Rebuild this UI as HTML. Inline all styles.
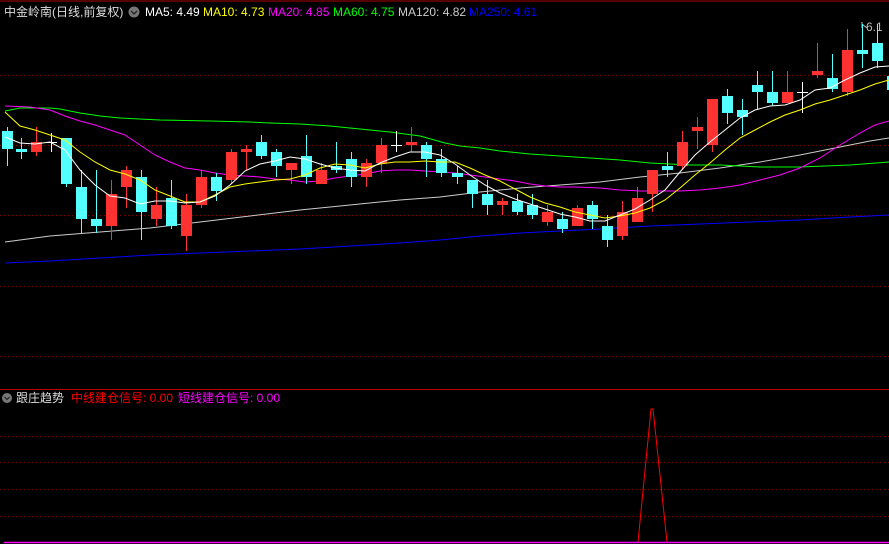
<!DOCTYPE html>
<html><head><meta charset="utf-8"><style>
html,body{margin:0;padding:0;background:#000;width:889px;height:544px;overflow:hidden}
svg{display:block}
text{font-family:"Liberation Sans","Noto Sans CJK SC",sans-serif;font-size:12px}
</style></head><body>
<svg width="889" height="544" viewBox="0 0 889 544" xmlns="http://www.w3.org/2000/svg">
<rect width="889" height="544" fill="#000"/>
<line x1="0" y1="1" x2="889" y2="1" stroke="#a00" stroke-width="1"/>
<g stroke="#800" stroke-dasharray="1,3" stroke-width="1">
<line x1="0" y1="75.5" x2="889" y2="75.5"/>
<line x1="0" y1="145.5" x2="889" y2="145.5"/>
<line x1="0" y1="215.5" x2="889" y2="215.5"/>
<line x1="0" y1="286.5" x2="889" y2="286.5"/>
<line x1="0" y1="356.5" x2="889" y2="356.5"/>
<line x1="0" y1="436.5" x2="889" y2="436.5"/>
<line x1="0" y1="462.5" x2="889" y2="462.5"/>
<line x1="0" y1="489.5" x2="889" y2="489.5"/>
<line x1="0" y1="516.5" x2="889" y2="516.5"/>
</g>
<line x1="0" y1="389.5" x2="889" y2="389.5" stroke="#b00" stroke-width="1"/>

<text x="4" y="16" fill="#ddd">中金岭南(日线,前复权)</text>
<circle cx="134" cy="12" r="5.5" fill="#777"/><path d="M131 11l3 3 3-3" stroke="#222" fill="none" stroke-width="1.3"/>
<text x="145" y="16" fill="#fff">MA5: 4.49</text>
<text x="203" y="16" fill="#ff0">MA10: 4.73</text>
<text x="268" y="16" fill="#f0f">MA20: 4.85</text>
<text x="333" y="16" fill="#0f0">MA60: 4.75</text>
<text x="398" y="16" fill="#ccc">MA120: 4.82</text>
<text x="469" y="16" fill="#00f">MA250: 4.61</text>
<text x="866" y="31" fill="#bbb">6.1</text>
<path d="M862 22l0 6M862 24l5 4" stroke="#bbb" fill="none"/>

<g fill="none" stroke-width="1">
<polyline stroke="#00f" points="5,263 50,261 100,258 150,255 200,253 250,251 300,249 350,246 400,243 440,240 480,236 520,233 560,231 600,229 650,226 700,224 750,222 800,220 850,217 889,215"/>
<polyline stroke="#ccc" points="5,242 50,236 100,232 150,228 200,222 250,216 300,210 350,205 400,200 440,197 480,192 520,188 560,185 600,182 640,177 680,173 720,168 760,162 800,155 840,147 870,141 889,138"/>
<polyline stroke="#0f0" points="5,111 20,108 50,108 60,109 80,113 100,116 120,118 160,120 210,121 250,122 270,123 300,124 330,126 360,129 390,132 420,136 445,143 460,146 480,148 500,151 530,154 560,156 590,158 620,160 650,163 690,165 720,165 760,167 800,167 850,165 889,162"/>
<polyline stroke="#f0f" points="5,106 30,107 50,110 65,116 80,121 95,125 110,130 125,135 140,145 155,155 170,162 185,168 200,170 215,173 230,175 245,176 260,177 275,179 290,180 305,182 320,181 335,178 350,176 365,174 380,171 395,170 410,170 425,171 440,172 455,173 470,175 485,177 500,179 515,181 530,184 545,186 560,187 575,187 600,188 620,190 640,191 660,191 680,191 700,190 720,188 740,185 760,180 780,175 800,168 820,158 840,145 860,133 875,125 889,121"/>
</g>

<g fill="#54ffff" stroke="#54ffff">
<line x1="7.5" y1="127" x2="7.5" y2="166"/><rect x="2" y="131" width="11" height="18" stroke="none"/>
<line x1="21.5" y1="138" x2="21.5" y2="159"/><rect x="16" y="149" width="11" height="3" stroke="none"/>
<line x1="66.5" y1="138" x2="66.5" y2="187"/><rect x="61" y="138" width="11" height="46" stroke="none"/>
<line x1="81.5" y1="170" x2="81.5" y2="233"/><rect x="76" y="187" width="11" height="32" stroke="none"/>
<line x1="96.5" y1="170" x2="96.5" y2="233"/><rect x="91" y="219" width="11" height="7" stroke="none"/>
<line x1="141.5" y1="170" x2="141.5" y2="240"/><rect x="136" y="177" width="11" height="35" stroke="none"/>
<line x1="171.5" y1="180" x2="171.5" y2="229"/><rect x="166" y="198" width="11" height="28" stroke="none"/>
<line x1="216.5" y1="173" x2="216.5" y2="201"/><rect x="211" y="177" width="11" height="14" stroke="none"/>
<line x1="261.5" y1="135" x2="261.5" y2="159"/><rect x="256" y="142" width="11" height="14" stroke="none"/>
<line x1="276.5" y1="149" x2="276.5" y2="177"/><rect x="271" y="152" width="11" height="14" stroke="none"/>
<line x1="306.5" y1="135" x2="306.5" y2="184"/><rect x="301" y="156" width="11" height="21" stroke="none"/>
<line x1="336.5" y1="142" x2="336.5" y2="173"/><rect x="331" y="166" width="11" height="4" stroke="none"/>
<line x1="351.5" y1="152" x2="351.5" y2="187"/><rect x="346" y="159" width="11" height="18" stroke="none"/>
<line x1="426.5" y1="142" x2="426.5" y2="177"/><rect x="421" y="145" width="11" height="14" stroke="none"/>
<line x1="441.5" y1="149" x2="441.5" y2="177"/><rect x="436" y="159" width="11" height="14" stroke="none"/>
<line x1="457.5" y1="166" x2="457.5" y2="184"/><rect x="452" y="173" width="11" height="4" stroke="none"/>
<line x1="472.5" y1="180" x2="472.5" y2="208"/><rect x="467" y="180" width="11" height="14" stroke="none"/>
<line x1="487.5" y1="180" x2="487.5" y2="215"/><rect x="482" y="194" width="11" height="11" stroke="none"/>
<line x1="517.5" y1="194" x2="517.5" y2="215"/><rect x="512" y="201" width="11" height="11" stroke="none"/>
<line x1="532.5" y1="194" x2="532.5" y2="219"/><rect x="527" y="205" width="11" height="10" stroke="none"/>
<line x1="562.5" y1="212" x2="562.5" y2="233"/><rect x="557" y="219" width="11" height="10" stroke="none"/>
<line x1="592.5" y1="201" x2="592.5" y2="229"/><rect x="587" y="205" width="11" height="14" stroke="none"/>
<line x1="607.5" y1="215" x2="607.5" y2="247"/><rect x="602" y="226" width="11" height="14" stroke="none"/>
<line x1="667.5" y1="152" x2="667.5" y2="177"/><rect x="662" y="166" width="11" height="4" stroke="none"/>
<line x1="727.5" y1="89" x2="727.5" y2="124"/><rect x="722" y="96" width="11" height="17" stroke="none"/>
<line x1="742.5" y1="99" x2="742.5" y2="135"/><rect x="737" y="110" width="11" height="7" stroke="none"/>
<line x1="757.5" y1="71" x2="757.5" y2="110"/><rect x="752" y="85" width="11" height="7" stroke="none"/>
<line x1="772.5" y1="71" x2="772.5" y2="106"/><rect x="767" y="92" width="11" height="11" stroke="none"/>
<line x1="832.5" y1="54" x2="832.5" y2="92"/><rect x="827" y="78" width="11" height="11" stroke="none"/>
<line x1="862.5" y1="24" x2="862.5" y2="68"/><rect x="857" y="50" width="11" height="4" stroke="none"/>
<line x1="877.5" y1="24" x2="877.5" y2="68"/><rect x="872" y="43" width="11" height="18" stroke="none"/>
<line x1="892.5" y1="70" x2="892.5" y2="95"/><rect x="887" y="76" width="11" height="14" stroke="none"/>
</g>
<g fill="#ff3232" stroke="#ff3232">
<line x1="36.5" y1="127" x2="36.5" y2="156"/><rect x="31" y="142" width="11" height="10" stroke="none"/>
<line x1="111.5" y1="180" x2="111.5" y2="240"/><rect x="106" y="194" width="11" height="32" stroke="none"/>
<line x1="126.5" y1="166" x2="126.5" y2="208"/><rect x="121" y="170" width="11" height="17" stroke="none"/>
<line x1="156.5" y1="187" x2="156.5" y2="226"/><rect x="151" y="205" width="11" height="14" stroke="none"/>
<line x1="186.5" y1="194" x2="186.5" y2="251"/><rect x="181" y="205" width="11" height="31" stroke="none"/>
<line x1="201.5" y1="170" x2="201.5" y2="208"/><rect x="196" y="177" width="11" height="28" stroke="none"/>
<line x1="231.5" y1="149" x2="231.5" y2="184"/><rect x="226" y="152" width="11" height="28" stroke="none"/>
<line x1="246.5" y1="145" x2="246.5" y2="170"/><rect x="241" y="149" width="11" height="3" stroke="none"/>
<line x1="291.5" y1="163" x2="291.5" y2="184"/><rect x="286" y="163" width="11" height="7" stroke="none"/>
<line x1="321.5" y1="163" x2="321.5" y2="184"/><rect x="316" y="170" width="11" height="14" stroke="none"/>
<line x1="366.5" y1="159" x2="366.5" y2="187"/><rect x="361" y="163" width="11" height="14" stroke="none"/>
<line x1="381.5" y1="138" x2="381.5" y2="173"/><rect x="376" y="145" width="11" height="18" stroke="none"/>
<line x1="411.5" y1="127" x2="411.5" y2="152"/><rect x="406" y="142" width="11" height="3" stroke="none"/>
<line x1="502.5" y1="198" x2="502.5" y2="215"/><rect x="497" y="201" width="11" height="4" stroke="none"/>
<line x1="547.5" y1="205" x2="547.5" y2="226"/><rect x="542" y="212" width="11" height="10" stroke="none"/>
<line x1="577.5" y1="205" x2="577.5" y2="226"/><rect x="572" y="208" width="11" height="18" stroke="none"/>
<line x1="622.5" y1="201" x2="622.5" y2="240"/><rect x="617" y="212" width="11" height="24" stroke="none"/>
<line x1="637.5" y1="187" x2="637.5" y2="222"/><rect x="632" y="198" width="11" height="24" stroke="none"/>
<line x1="652.5" y1="170" x2="652.5" y2="212"/><rect x="647" y="170" width="11" height="24" stroke="none"/>
<line x1="682.5" y1="131" x2="682.5" y2="170"/><rect x="677" y="142" width="11" height="24" stroke="none"/>
<line x1="697.5" y1="117" x2="697.5" y2="149"/><rect x="692" y="127" width="11" height="4" stroke="none"/>
<line x1="712.5" y1="99" x2="712.5" y2="152"/><rect x="707" y="99" width="11" height="46" stroke="none"/>
<line x1="787.5" y1="71" x2="787.5" y2="103"/><rect x="782" y="92" width="11" height="11" stroke="none"/>
<line x1="817.5" y1="43" x2="817.5" y2="78"/><rect x="812" y="71" width="11" height="4" stroke="none"/>
<line x1="847.5" y1="29" x2="847.5" y2="96"/><rect x="842" y="50" width="11" height="42" stroke="none"/>
</g>
<g stroke="#fff">
<line x1="51.5" y1="133" x2="51.5" y2="152"/><line x1="46" y1="142.5" x2="57" y2="142.5"/>
<line x1="396.5" y1="131" x2="396.5" y2="152"/><line x1="391" y1="145.5" x2="402" y2="145.5"/>
<line x1="802.5" y1="82" x2="802.5" y2="113"/><line x1="797" y1="92.5" x2="808" y2="92.5"/>
</g>

<g fill="none" stroke-width="1">
<polyline stroke="#ff0" points="5,112 20,126 35,130 50,135 65,140 80,152 95,162 110,170 125,174 140,180 155,190 170,196 185,202 200,202 215,195 230,187 245,184 260,182 275,180 290,179 305,175 320,168 335,164 350,165 365,168 380,164 395,162 410,162 425,161 440,162 455,162 470,168 485,175 500,181 515,189 530,197 545,203 560,207 575,212 590,215 605,218 620,216 635,213 650,208 665,200 680,188 695,175 710,163 725,150 740,138 755,130 770,122 785,115 800,110 815,104 830,100 845,95 860,90 875,84 889,80"/>
<polyline stroke="#fff" points="5,137 20,143 35,144 50,142 65,150 80,170 95,185 110,196 125,198 140,204 155,201 170,201 185,203 200,202 215,196 230,185 245,171 260,164 275,161 290,157 305,159 320,164 335,168 350,170 365,171 380,163 395,157 410,152 425,152 440,155 455,164 470,175 485,185 500,193 515,199 530,204 545,209 560,214 575,217 590,221 605,221 620,215 635,209 650,200 665,190 680,172 695,155 710,142 725,130 740,118 755,110 770,106 785,105 800,100 815,90 830,88 845,80 860,73 875,67 889,66"/>
</g>

<circle cx="7" cy="398" r="5" fill="#777"/><path d="M4.5 397l2.5 2.5 2.5-2.5" stroke="#222" fill="none" stroke-width="1.2"/>
<text x="16" y="402" fill="#ddd">跟庄趋势</text>
<text x="71" y="402" fill="#f00">中线建仓信号: 0.00</text>
<text x="178" y="402" fill="#f0f">短线建仓信号: 0.00</text>
<polyline points="638,542 651,409 653,409 667,542" fill="none" stroke="#f00" stroke-width="1"/>
<line x1="4" y1="542.5" x2="889" y2="542.5" stroke="#f0f" stroke-width="1.5"/>
</svg>
</body></html>
